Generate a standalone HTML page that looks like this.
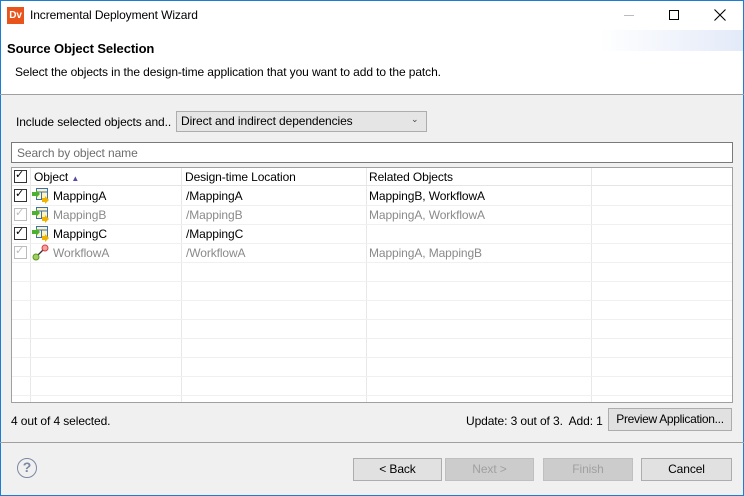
<!DOCTYPE html>
<html><head><meta charset="utf-8"><style>
*{box-sizing:border-box;margin:0;padding:0}
body{width:744px;height:496px;overflow:hidden;font-family:"Liberation Sans",sans-serif;font-size:12px;color:#000;background:#f0f0f0;position:relative;letter-spacing:-0.1px}
.a{position:absolute}
.t{white-space:nowrap}
.btn{position:absolute;height:23px;border:1px solid #adadad;background:#e1e1e1;text-align:center;line-height:21px;white-space:nowrap}
.dis{color:#a0a0a0;border-color:#bfbfbf;background:#cccccc}
.cb{position:absolute;width:13px;height:13px;border:1px solid #333;background:#fff}
.cb.g{border-color:#bcbcbc}
.gray{color:#8a8a8a}
</style></head><body>
<div class="a" style="left:0;top:0;width:744px;height:94px;background:#fff"></div>
<div class="a" style="left:0;top:0;width:744px;height:1px;background:#1a7fd4"></div>
<div class="a" style="left:0;top:0;width:1px;height:496px;background:#1a7fd4"></div>
<div class="a" style="left:743px;top:0;width:1px;height:496px;background:#1a7fd4"></div>
<div class="a" style="left:0;top:495px;width:744px;height:1px;background:#1a7fd4"></div>
<div class="a" style="left:7px;top:7px;width:17px;height:17px;background:#e8541c;color:#fff;font-size:10px;font-weight:bold;line-height:17px;text-align:center">Dv</div>
<div class="a t" style="left:30px;top:8px;font-size:12px">Incremental Deployment Wizard</div>
<div class="a" style="left:624px;top:15px;width:10px;height:1px;background:#bbb"></div>
<div class="a" style="left:669px;top:10px;width:10px;height:10px;border:1px solid #000"></div>
<svg class="a" style="left:714px;top:9px" width="12" height="12"><path d="M0.5 0.5L11.5 11.5M11.5 0.5L0.5 11.5" stroke="#000" stroke-width="1.1"/></svg>
<div class="a" style="left:600px;top:30px;width:143px;height:21px;background:linear-gradient(to right,rgba(255,255,255,0),#e3eaf8)"></div>
<div class="a t" style="left:7px;top:41px;font-weight:bold;font-size:13px">Source Object Selection</div>
<div class="a t" style="left:15px;top:65px">Select the objects in the design-time application that you want to add to the patch.</div>
<div class="a" style="left:0;top:94px;width:744px;height:1px;background:#a0a0a0"></div>
<div class="a t" style="left:16px;top:115px">Include selected objects and..</div>
<div class="a" style="left:176px;top:111px;width:251px;height:21px;border:1px solid #adadad;background:#e5e5e5"></div>
<div class="a t" style="left:181px;top:114px">Direct and indirect dependencies</div>
<div class="a t" style="left:411px;top:114px;font-size:9px;color:#444">⌄</div>
<div class="a" style="left:11px;top:142px;width:722px;height:21px;border:1px solid #7a7a7a;background:#fff"></div>
<div class="a t" style="left:17px;top:146px;color:#6d6d6d">Search by object name</div>
<div class="a" style="left:11px;top:167px;width:722px;height:236px;border:1px solid #a0a0a0;background:#fff"></div>
<div class="a" style="left:12px;top:168px;width:720px;height:18px;background:#fff;border-bottom:1px solid #e5e5e5"></div>
<div class="a" style="left:30px;top:168px;width:1px;height:234px;background:#e8e8e8"></div>
<div class="a" style="left:181px;top:168px;width:1px;height:234px;background:#e8e8e8"></div>
<div class="a" style="left:366px;top:168px;width:1px;height:234px;background:#e8e8e8"></div>
<div class="a" style="left:591px;top:168px;width:1px;height:234px;background:#e8e8e8"></div>
<div class="cb" style="left:14px;top:170px"></div><div class="a t" style="left:15px;top:168px;font-size:11px">✓</div>
<div class="a t" style="left:34px;top:170px">Object <span style="color:#5a4aa0;font-size:8px">▲</span></div>
<div class="a t" style="left:185px;top:170px">Design-time Location</div>
<div class="a t" style="left:369px;top:170px">Related Objects</div>
<div class="a" style="left:12px;top:205px;width:720px;height:1px;background:#f0f0f0"></div>
<div class="a" style="left:12px;top:224px;width:720px;height:1px;background:#f0f0f0"></div>
<div class="a" style="left:12px;top:243px;width:720px;height:1px;background:#f0f0f0"></div>
<div class="a" style="left:12px;top:262px;width:720px;height:1px;background:#f0f0f0"></div>
<div class="a" style="left:12px;top:281px;width:720px;height:1px;background:#f0f0f0"></div>
<div class="a" style="left:12px;top:300px;width:720px;height:1px;background:#f0f0f0"></div>
<div class="a" style="left:12px;top:319px;width:720px;height:1px;background:#f0f0f0"></div>
<div class="a" style="left:12px;top:338px;width:720px;height:1px;background:#f0f0f0"></div>
<div class="a" style="left:12px;top:357px;width:720px;height:1px;background:#f0f0f0"></div>
<div class="a" style="left:12px;top:376px;width:720px;height:1px;background:#f0f0f0"></div>
<div class="a" style="left:12px;top:395px;width:720px;height:1px;background:#f0f0f0"></div>
<div class="cb" style="left:14px;top:189px"></div><div class="a t" style="left:15px;top:187px;font-size:11px">✓</div>
<svg class="a" style="left:32px;top:187px" width="18" height="17"><rect x="4.5" y="1.5" width="11" height="11" fill="#fff3c0" stroke="#3a6fb5"/><line x1="4" y1="5" x2="15" y2="5" stroke="#3a6fb5"/><line x1="9.5" y1="5" x2="9.5" y2="12" stroke="#3a6fb5"/><path d="M0 5h4v-2l4 4-4 4v-2H0z" fill="#4cb030"/><path d="M10 11h3v-2l4 4-4 4v-2h-3z" fill="#f0b400"/></svg>
<div class="a t" style="left:53px;top:189px">MappingA</div><div class="a t" style="left:186px;top:189px">/MappingA</div><div class="a t" style="left:369px;top:189px">MappingB, WorkflowA</div>
<div class="cb g" style="left:14px;top:208px"></div><div class="a t" style="left:15px;top:206px;font-size:11px;color:#bcbcbc">✓</div>
<svg class="a" style="left:32px;top:206px" width="18" height="17"><rect x="4.5" y="1.5" width="11" height="11" fill="#fff3c0" stroke="#3a6fb5"/><line x1="4" y1="5" x2="15" y2="5" stroke="#3a6fb5"/><line x1="9.5" y1="5" x2="9.5" y2="12" stroke="#3a6fb5"/><path d="M0 5h4v-2l4 4-4 4v-2H0z" fill="#4cb030"/><path d="M10 11h3v-2l4 4-4 4v-2h-3z" fill="#f0b400"/></svg>
<div class="a t gray" style="left:53px;top:208px">MappingB</div><div class="a t gray" style="left:186px;top:208px">/MappingB</div><div class="a t gray" style="left:369px;top:208px">MappingA, WorkflowA</div>
<div class="cb" style="left:14px;top:227px"></div><div class="a t" style="left:15px;top:225px;font-size:11px">✓</div>
<svg class="a" style="left:32px;top:225px" width="18" height="17"><rect x="4.5" y="1.5" width="11" height="11" fill="#fff3c0" stroke="#3a6fb5"/><line x1="4" y1="5" x2="15" y2="5" stroke="#3a6fb5"/><line x1="9.5" y1="5" x2="9.5" y2="12" stroke="#3a6fb5"/><path d="M0 5h4v-2l4 4-4 4v-2H0z" fill="#4cb030"/><path d="M10 11h3v-2l4 4-4 4v-2h-3z" fill="#f0b400"/></svg>
<div class="a t" style="left:53px;top:227px">MappingC</div><div class="a t" style="left:186px;top:227px">/MappingC</div>
<div class="cb g" style="left:14px;top:246px"></div><div class="a t" style="left:15px;top:244px;font-size:11px;color:#bcbcbc">✓</div>
<svg class="a" style="left:32px;top:244px" width="18" height="17"><line x1="4" y1="13" x2="12" y2="5" stroke="#333" stroke-width="1.3"/><circle cx="13" cy="4" r="3" fill="#f7a0a0" stroke="#d04040"/><circle cx="4" cy="13" r="3" fill="#9fd060" stroke="#5a9a20"/></svg>
<div class="a t gray" style="left:53px;top:246px">WorkflowA</div><div class="a t gray" style="left:186px;top:246px">/WorkflowA</div><div class="a t gray" style="left:369px;top:246px">MappingA, MappingB</div>
<div class="a t" style="left:11px;top:414px">4 out of 4 selected.</div>
<div class="a t" style="left:466px;top:414px">Update: 3 out of 3.&nbsp; Add: 1</div>
<div class="btn" style="left:608px;top:408px;width:124px;letter-spacing:-0.3px">Preview Application...</div>
<div class="a" style="left:0;top:442px;width:744px;height:1px;background:#a0a0a0"></div>
<div class="a" style="left:17px;top:458px;width:20px;height:20px;border:1.5px solid #7a88a3;border-radius:50%;text-align:center;line-height:17px;font-weight:bold;color:#7a88a3;font-size:14px">?</div>
<div class="btn" style="left:353px;top:458px;width:89px">&lt; Back</div>
<div class="btn dis" style="left:445px;top:458px;width:89px">Next &gt;</div>
<div class="btn dis" style="left:543px;top:458px;width:90px">Finish</div>
<div class="btn" style="left:641px;top:458px;width:91px">Cancel</div>
</body></html>
